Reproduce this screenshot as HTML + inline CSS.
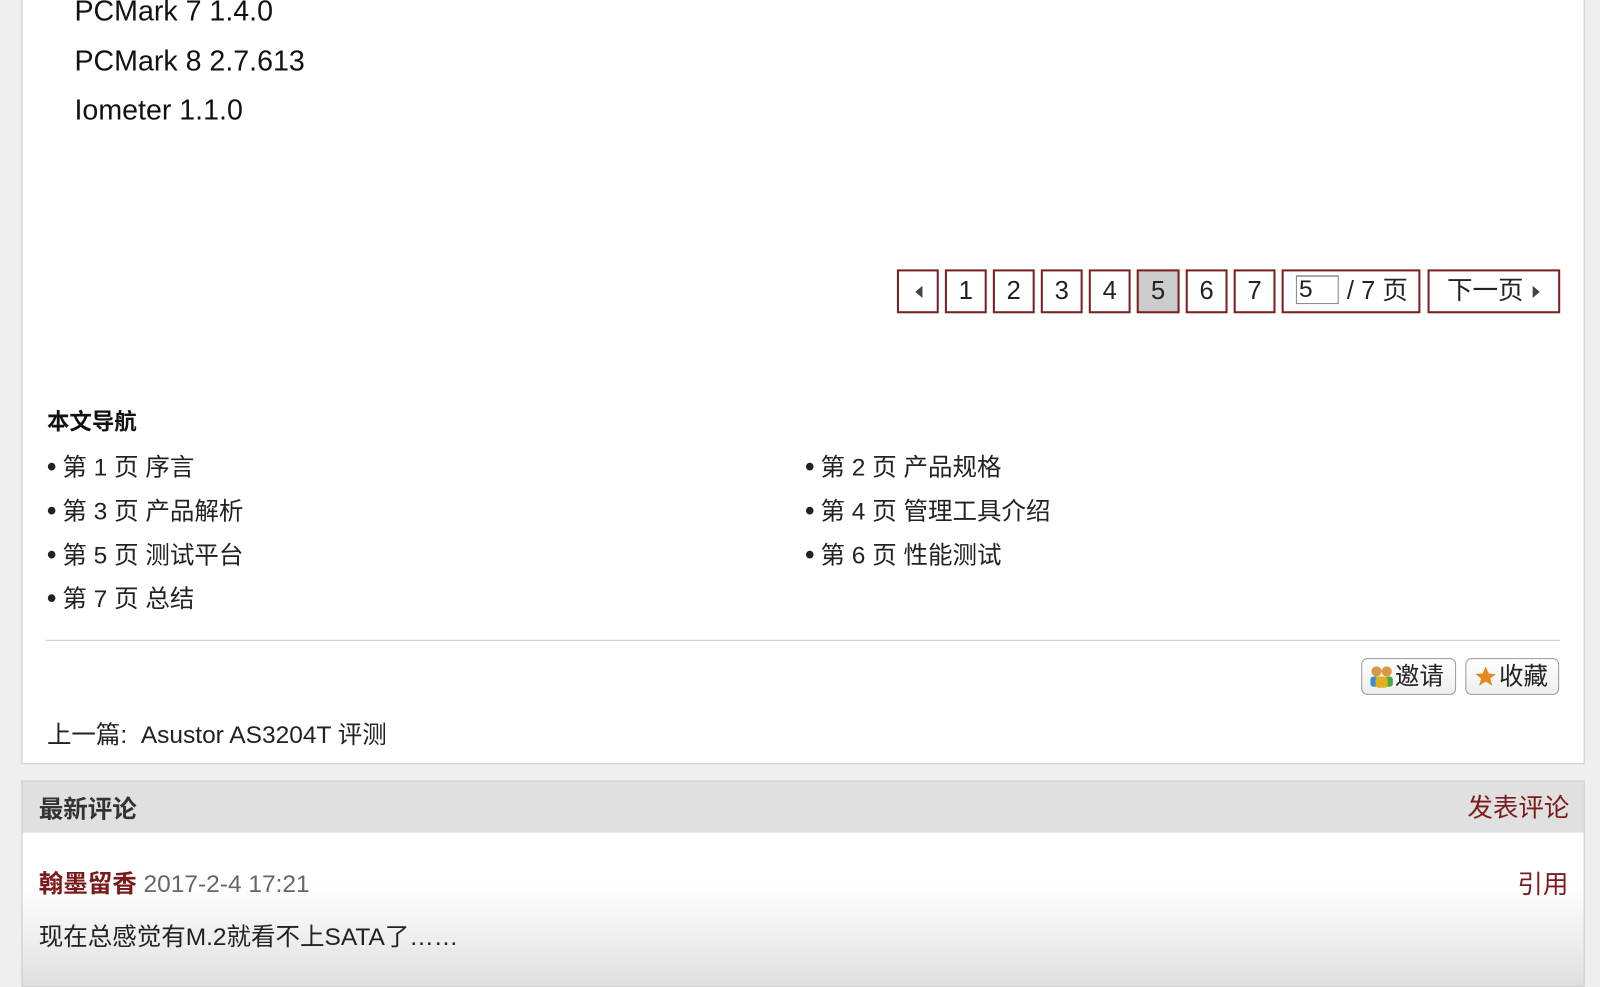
<!DOCTYPE html>
<html><head><meta charset="utf-8"><style>
body{margin:0;width:1600px;height:954px;background:#efefef;overflow:hidden;font-family:"Liberation Sans","Noto Sans CJK SC",sans-serif;color:#222}
#w{position:absolute;left:0;top:0;width:1568px;height:935px;transform:scale(1.0204);transform-origin:0 0}
.a{position:absolute}
.p1{left:21px;top:-5px;width:1530px;height:752px;background:#fff;border:1px solid #c8c8c8}
.t{font-size:28px;color:#111}
.pg{top:264px;height:39px;border:2px solid #7a2020;background:#fff;font-size:25px;text-align:center;line-height:39px;color:#222}
.nav{font-size:24px;color:#222}
.nav b{font-size:26px;margin-right:6px}
.btn{top:645px;height:36px;border:1px solid #999;border-radius:6px;background:linear-gradient(#fff,#eee);font-size:24px;line-height:36px;padding-left:6px;box-sizing:border-box}
</style></head><body><div id="w">
<div class="a p1"></div>
<div class="a t" style="left:73px;top:-5px">PCMark 7 1.4.0</div>
<div class="a t" style="left:73px;top:44px">PCMark 8 2.7.613</div>
<div class="a t" style="left:73px;top:92px">Iometer 1.1.0</div>

<div class="a pg" style="left:879px;width:37px"><svg width="12" height="14" style="margin-top:12px"><path d="M10 1L3 7L10 13Z" fill="#444"/></svg></div>
<div class="a pg" style="left:926px;width:37px">1</div>
<div class="a pg" style="left:973px;width:37px">2</div>
<div class="a pg" style="left:1020px;width:37px">3</div>
<div class="a pg" style="left:1067px;width:37px">4</div>
<div class="a pg" style="left:1114px;width:38px;background:#ccc">5</div>
<div class="a pg" style="left:1162px;width:37px">6</div>
<div class="a pg" style="left:1209px;width:37px">7</div>
<div class="a pg" style="left:1256px;width:132px;text-align:left"><span style="display:inline-block;width:38px;height:26px;border:1px solid #888;border-top-color:#555;line-height:26px;margin:4px 0 0 12px;vertical-align:top;font-size:24px;padding-left:2px">5</span><span style="margin-left:8px">/ 7 页</span></div>
<div class="a pg" style="left:1399px;width:126px">下一页 <svg width="10" height="14"><path d="M2 1L9 7L2 13Z" fill="#444"/></svg></div>

<div class="a" style="left:46px;top:396px;font-size:22px;font-weight:bold;color:#111">本文导航</div>
<div class="a nav" style="left:46px;top:438px"><b>•</b>第 1 页 序言</div>
<div class="a nav" style="left:789px;top:438px"><b>•</b>第 2 页 产品规格</div>
<div class="a nav" style="left:46px;top:481px"><b>•</b>第 3 页 产品解析</div>
<div class="a nav" style="left:789px;top:481px"><b>•</b>第 4 页 管理工具介绍</div>
<div class="a nav" style="left:46px;top:524px"><b>•</b>第 5 页 测试平台</div>
<div class="a nav" style="left:789px;top:524px"><b>•</b>第 6 页 性能测试</div>
<div class="a nav" style="left:46px;top:567px"><b>•</b>第 7 页 总结</div>
<div class="a" style="left:45px;top:627px;width:1484px;height:1px;background:#c8c8c8"></div>

<div class="a btn" style="left:1334px;width:93px"><svg width="26" height="24" style="vertical-align:-4px"><circle cx="8" cy="7" r="5" fill="#d89a40"/><circle cx="18" cy="7" r="5" fill="#d89a40"/><rect x="2" y="12" width="8" height="10" rx="3" fill="#3a8ad8"/><rect x="16" y="12" width="8" height="10" rx="3" fill="#4aa840"/><rect x="7" y="12" width="12" height="11" rx="3" fill="#e0b020"/></svg>邀请</div>
<div class="a btn" style="left:1436px;width:92px"><svg width="26" height="24" style="vertical-align:-4px"><path d="M13 2L16 9L23 9.5L17.5 14L19.5 21L13 17L6.5 21L8.5 14L3 9.5L10 9Z" fill="#e08a20"/></svg>收藏</div>
<div class="a" style="left:46px;top:700px;font-size:24px;color:#222">上一篇:&nbsp; Asustor AS3204T 评测</div>

<div class="a" style="left:21px;top:765px;width:1530px;height:200px;background:linear-gradient(#fff 50%,#e0e0e0);border:1px solid #c8c8c8"></div>
<div class="a" style="left:22px;top:766px;width:1530px;height:50px;background:#e0e0e0"></div>
<div class="a" style="left:38px;top:773px;font-size:24px;font-weight:bold;color:#333">最新评论</div>
<div class="a" style="left:1438px;top:772px;font-size:25px;color:#7a1a1a">发表评论</div>
<div class="a" style="left:38px;top:846px;font-size:24px;font-weight:bold;color:#7a1a1a">翰墨留香 <span style="font-weight:normal;color:#666">2017-2-4 17:21</span></div>
<div class="a" style="left:1487px;top:847px;font-size:25px;color:#7a1a1a">引用</div>
<div class="a" style="left:38px;top:898px;font-size:24px;color:#222">现在总感觉有M.2就看不上SATA了……</div>
</div></body></html>
